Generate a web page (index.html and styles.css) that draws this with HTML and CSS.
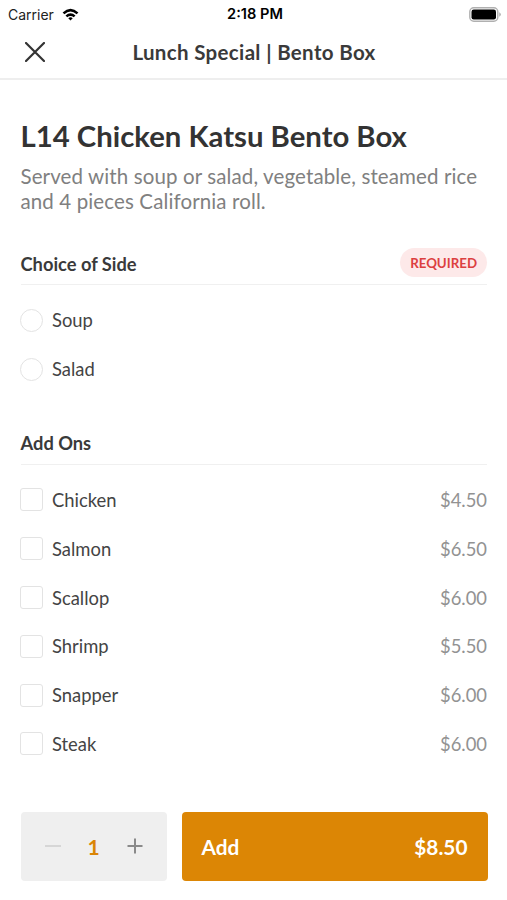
FILE: index.html
```html
<!DOCTYPE html>
<html lang="en">
<head>
<meta charset="utf-8">
<title>Lunch Special</title>
<link rel="stylesheet" href="styles.css">
</head>
<body>
<div class="screen">
  <div class="status">
    <div class="carrier"><span>Carrier</span>
      <svg width="17" height="13" viewBox="0 0 18 14"><path d="M0.5 4.8Q9-3 17.5 4.8L15.6 6.8Q9 .8 2.4 6.8ZM3.6 8Q9 3.1 14.4 8L12.5 10Q9 7 5.5 10ZM6.6 11Q9 8.9 11.4 11L9 13.5Z"/></svg>
    </div>
    <div class="time">2:18 PM</div>
    <svg class="battery" width="32" height="15" viewBox="0 0 32 15"><rect x=".8" y=".8" width="28" height="13.4" rx="4" fill="none" stroke="#b0b0b0" stroke-width="1.4"/><rect x="2.5" y="2.5" width="24.5" height="10" rx="2.2"/><path d="M30.3 5.3Q31.8 6 31.8 7.5T30.3 9.7Z" fill="#aaa"/></svg>
  </div>
  <header class="nav">
    <svg class="close" width="20" height="20" viewBox="0 0 20 20"><path d="M1 1 19 19M19 1 1 19" fill="none" stroke="#333" stroke-width="2.2" stroke-linecap="round"/></svg>
    <div class="nav-title">Lunch Special | Bento Box</div>
  </header>
  <main class="content">
    <h1>L14 Chicken Katsu Bento Box</h1>
    <p class="desc">Served with soup or salad, vegetable, steamed rice<br>and 4 pieces California roll.</p>
    <section class="sides">
      <div class="section-head"><h2>Choice of Side</h2><span class="badge">REQUIRED</span></div>
      <div class="option"><i class="radio"></i><span>Soup</span></div>
      <div class="option"><i class="radio"></i><span>Salad</span></div>
    </section>
    <section class="addons">
      <div class="section-head"><h2>Add Ons</h2></div>
      <div class="option"><i class="check"></i><span>Chicken</span><span class="price">$4.50</span></div>
      <div class="option"><i class="check"></i><span>Salmon</span><span class="price">$6.50</span></div>
      <div class="option"><i class="check"></i><span>Scallop</span><span class="price">$6.00</span></div>
      <div class="option"><i class="check"></i><span>Shrimp</span><span class="price">$5.50</span></div>
      <div class="option"><i class="check"></i><span>Snapper</span><span class="price">$6.00</span></div>
      <div class="option"><i class="check"></i><span>Steak</span><span class="price">$6.00</span></div>
    </section>
  </main>
  <footer class="footer">
    <div class="stepper">
      <svg width="16" height="16" viewBox="0 0 16 16"><path d="M0 8H16" stroke="#d6d6d6" stroke-width="2"/></svg>
      <span class="qty">1</span>
      <svg width="16" height="16" viewBox="0 0 16 16"><path d="M.5 8H15.5M8 .5V15.5" stroke="#8a8a8a" stroke-width="2"/></svg>
    </div>
    <div class="add"><span>Add</span><span>$8.50</span></div>
  </footer>
</div>
</body>
</html>
```
FILE: styles.css
```css
* { box-sizing: border-box; }
body { margin: 0; background: #fff; color: #3a3a3a; font-family: Lato, sans-serif; }
h1, h2, p { margin: 0; }
svg { display: block; flex: none; }
.screen { width: 507px; height: 900px; display: flex; flex-direction: column; overflow: hidden; }
.status { height: 27px; display: grid; grid-template-columns: 1fr auto 1fr; align-items: center; padding: 0 6px 0 8px; color: #000; font: 15px/27px Inter, sans-serif; }
.carrier { display: flex; align-items: center; gap: 8px; font-size: 14px; color: #222; }
.carrier svg { fill: #000; }
.time { font-weight: 600; font-size: 14.6px; padding: 1px 0 0 1px; }
.battery { justify-self: end; }
.nav { height: 53px; display: grid; grid-template-columns: 20px 1fr 20px; align-items: center; padding: 0 24px 1px 25px; border-bottom: 2px solid #eee; }
.nav-title { text-align: center; font-size: 20.5px; letter-spacing: .34px; font-weight: 700; line-height: 24px; white-space: nowrap; }
.content { flex: 1; padding: 38px 20px 0 20.5px; }
h1 { font-size: 29.3px; line-height: 36px; font-weight: 700; white-space: nowrap; color: #333; }
.desc { margin-top: 10px; font-size: 20.5px; letter-spacing: .12px; line-height: 25px; color: #808080; white-space: nowrap; }
.sides { margin-top: 27px; }
.section-head { height: 44px; display: flex; align-items: center; justify-content: space-between; border-bottom: 1px solid #f0f0f0; margin-bottom: 11px; }
h2 { padding-top: 2px; font-size: 18.3px; line-height: 22px; font-weight: 700; }
.badge { height: 29px; padding: 0 10px; border-radius: 15px; background: #fde9e9; color: #dc4040; font-size: 13.3px; font-weight: 700; line-height: 30px; }
.option { height: 48.8px; display: flex; align-items: center; font-size: 18.4px; color: #444; }
.radio, .check { width: 23px; height: 23px; border: 1.5px solid #e3e3e3; margin: 0 9px 0 -.5px; }
.radio { border-radius: 50%; }
.check { border-radius: 3px; }
.price { margin-left: auto; color: #929292; }
.addons { margin-top: 27px; }
.footer { height: 105px; display: flex; gap: 15px; padding: 17px 19.5px 19.5px 20.5px; }
.stepper { width: 146px; border-radius: 4px; background: #efefef; display: flex; align-items: center; justify-content: space-between; padding: 0 24px; }
.qty { color: #da8506; font-size: 21px; font-weight: 700; }
.add { flex: 1; border-radius: 4px; background: #dc8605; color: #fff; display: flex; align-items: center; justify-content: space-between; padding: 0 20px; font-size: 20.8px; font-weight: 700; }
```
